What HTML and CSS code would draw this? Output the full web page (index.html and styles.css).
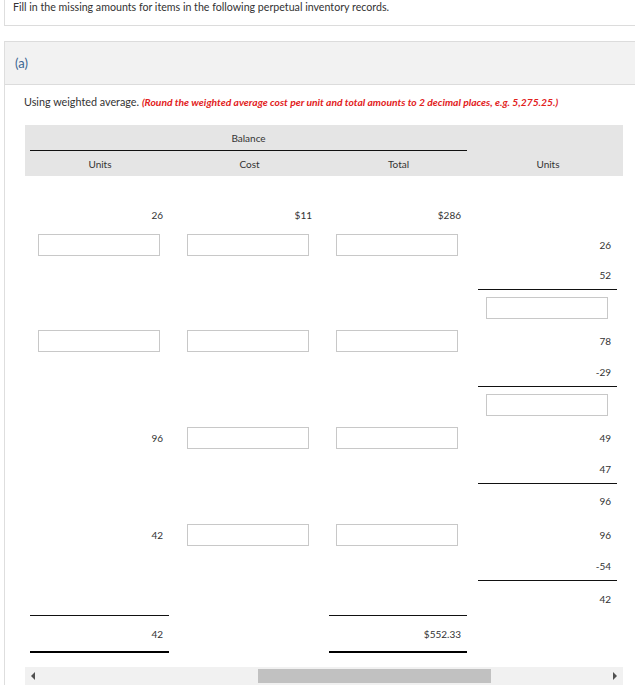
FILE: index.html
```html
<!DOCTYPE html>
<html>
<head>
<meta charset="utf-8">
<link rel="stylesheet" href="styles.css">
</head>
<body>
<div class="page">
  <div class="intro">Fill in the missing amounts for items in the following perpetual inventory records.</div>
  <div class="section">
    <div class="section-head">(a)</div>
    <div class="section-body">
      <p class="instr">Using weighted average. <em class="hint">(Round the weighted average cost per unit and total amounts to 2 decimal places, e.g. 5,275.25.)</em></p>
      <div class="tbl">
        <div class="thead">
          <div class="th balance">Balance</div>
          <div class="th col1">Units</div>
          <div class="th col2">Cost</div>
          <div class="th col3">Total</div>
          <div class="th col4">Units</div>
        </div>
        <div class="tbody">
          <div class="row h30"><div class="c">26</div><div class="c">$11</div><div class="c">$286</div><div class="c"></div></div>
          <div class="row h30"><div class="c"><span class="inp"></span></div><div class="c"><span class="inp"></span></div><div class="c"><span class="inp"></span></div><div class="c">26</div></div>
          <div class="row h30"><div class="c"></div><div class="c"></div><div class="c"></div><div class="c ul">52</div></div>
          <div class="row h35"><div class="c"></div><div class="c"></div><div class="c"></div><div class="c"><span class="inp"></span></div></div>
          <div class="row h32"><div class="c"><span class="inp"></span></div><div class="c"><span class="inp"></span></div><div class="c"><span class="inp"></span></div><div class="c">78</div></div>
          <div class="row h30"><div class="c"></div><div class="c"></div><div class="c"></div><div class="c ul">-29</div></div>
          <div class="row h35"><div class="c"></div><div class="c"></div><div class="c"></div><div class="c"><span class="inp"></span></div></div>
          <div class="row h32"><div class="c">96</div><div class="c"><span class="inp"></span></div><div class="c"><span class="inp"></span></div><div class="c">49</div></div>
          <div class="row h30"><div class="c"></div><div class="c"></div><div class="c"></div><div class="c ul">47</div></div>
          <div class="row h34"><div class="c"></div><div class="c"></div><div class="c"></div><div class="c">96</div></div>
          <div class="row h33"><div class="c">42</div><div class="c"><span class="inp"></span></div><div class="c"><span class="inp"></span></div><div class="c">96</div></div>
          <div class="row h30"><div class="c"></div><div class="c"></div><div class="c"></div><div class="c ul">-54</div></div>
          <div class="row h35"><div class="c ul"></div><div class="c"></div><div class="c ul"></div><div class="c">42</div></div>
          <div class="row h37"><div class="c dul">42</div><div class="c"></div><div class="c dul">$552.33</div><div class="c"></div></div>
        </div>
        <div class="scrollbar">
          <span class="arrow left"></span>
          <span class="thumb"></span>
          <span class="arrow right"></span>
        </div>
      </div>
    </div>
  </div>
</div>
</body>
</html>
```
FILE: styles.css
```css
* { box-sizing: border-box; }
html, body { margin: 0; padding: 0; background: #fff; }
body {
  font-family: Lato, "Open Sans", sans-serif;
  color: #333;
  font-size: 10px;
  width: 635px;
  height: 686px;
  overflow: hidden;
}
.page { padding-left: 4px; }
.intro {
  height: 26px;
  border-left: 1px solid #dedede;
  border-bottom: 1px solid #dcdcdc;
  padding: 0 0 0 8px;
  font-size: 10.65px;
  line-height: 14px;
  color: #333;
}
.section {
  margin-top: 15px;
  border-top: 1px solid #dcdcdc;
  border-left: 1px solid #dedede;
}
.section-head {
  height: 43px;
  background: #f2f2f2;
  border-bottom: 1px solid #dcdcdc;
  padding-left: 10px;
  font-size: 13px;
  line-height: 42px;
  color: #3a6592;
}
.section-body { padding: 10px 0 0 20px; }
.instr {
  margin: 0 0 0 -1px;
  font-size: 10.8px;
  line-height: 14px;
  color: #333;
}
.hint {
  color: #e2211c;
  font-weight: bold;
  font-style: italic;
  font-size: 10.3px;
}
.tbl { width: 598px; margin-top: 16px; }
.thead {
  background: #e5e5e5;
  height: 51px;
  display: grid;
  grid-template-columns: 150px 149px 149px 150px;
  grid-template-rows: 26px 25px;
}
.th {
  font-size: 10px;
  color: #333;
  display: flex;
  align-items: center;
  justify-content: center;
}
.balance {
  grid-column: 1 / 4;
  grid-row: 1;
  margin: 0 6px 0 5px;
  border-bottom: 1px solid #111;
}
.col1 { grid-column: 1; grid-row: 2; }
.col2 { grid-column: 2; grid-row: 2; }
.col3 { grid-column: 3; grid-row: 2; }
.col4 { grid-column: 4; grid-row: 2; }
.tbody { margin-top: 24px; }
.row {
  display: grid;
  grid-template-columns: 150px 149px 149px 150px;
}
.h30 { height: 30px; }
.h32 { height: 32px; }
.h33 { height: 33px; }
.h34 { height: 34px; }
.h35 { height: 35px; }
.h37 { height: 37px; }
.c {
  margin: 0 6px 0 5px;
  padding-right: 6px;
  display: flex;
  align-items: center;
  justify-content: flex-end;
  font-size: 10px;
  color: #333;
}
.ul { border-bottom: 1px solid #111; }
.dul { border-bottom: 2px solid #000; }
.inp {
  display: block;
  width: 122px;
  height: 22px;
  border: 1px solid #c8c8c8;
  background: #fff;
  margin-right: 3px;
}
.scrollbar {
  margin-top: 14px;
  height: 18px;
  background: #f1f1f1;
  position: relative;
}
.thumb {
  position: absolute;
  left: 233px;
  width: 233px;
  top: 2px;
  height: 14px;
  background: #c1c1c1;
}
.arrow {
  position: absolute;
  top: 5px;
  width: 0;
  height: 0;
  border-top: 4px solid transparent;
  border-bottom: 4px solid transparent;
}
.arrow.left { left: 6px; border-right: 4px solid #505050; }
.arrow.right { right: 6px; border-left: 4px solid #505050; }
```
